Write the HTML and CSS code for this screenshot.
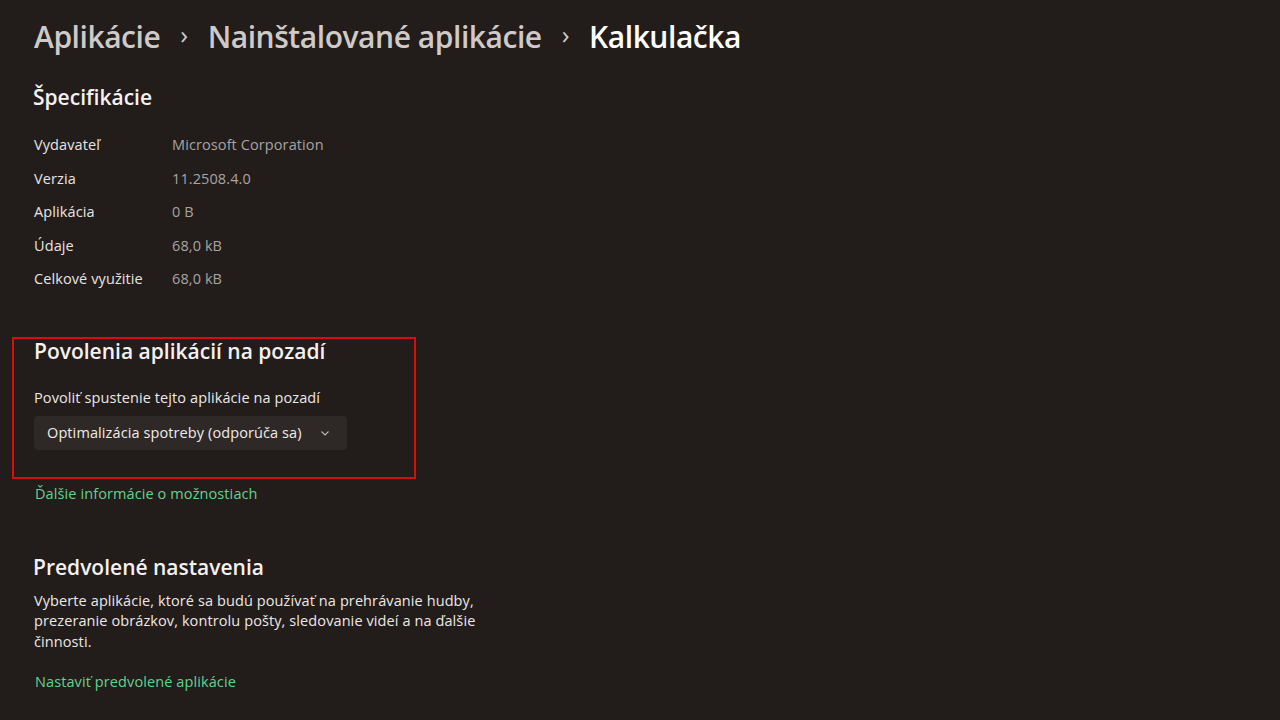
FILE: index.html
```html
<!DOCTYPE html>
<html lang="sk">
<head>
  <meta charset="UTF-8">
  <link rel="stylesheet" href="styles.css">
  <title>Kalkulačka</title>
</head>
<body>
  <div class="page">
    <div class="breadcrumb">
      <span class="crumb">Aplikácie</span>
      <span class="sep">›</span>
      <span class="crumb">Nainštalované aplikácie</span>
      <span class="sep">›</span>
      <span class="crumb current">Kalkulačka</span>
    </div>

    <h2 class="section-title specs-title">Špecifikácie</h2>
    <div class="specs">
      <div class="spec-label">Vydavateľ</div><div class="spec-value">Microsoft Corporation</div>
      <div class="spec-label">Verzia</div><div class="spec-value">11.2508.4.0</div>
      <div class="spec-label">Aplikácia</div><div class="spec-value">0 B</div>
      <div class="spec-label">Údaje</div><div class="spec-value">68,0 kB</div>
      <div class="spec-label">Celkové využitie</div><div class="spec-value">68,0 kB</div>
    </div>

    <div class="highlight">
      <h2 class="section-title">Povolenia aplikácií na pozadí</h2>
      <div class="field-label">Povoliť spustenie tejto aplikácie na pozadí</div>
      <div class="dropdown">
        <span>Optimalizácia spotreby (odporúča sa)</span>
        <svg class="chevron" width="10" height="10" viewBox="0 0 10 10">
          <path d="M1.5 3.5 L5 7 L8.5 3.5" fill="none" stroke="#bdb8b6" stroke-width="1.1"/>
        </svg>
      </div>
    </div>
    <a class="link more-link" href="#">Ďalšie informácie o možnostiach</a>

    <h2 class="section-title defaults-title">Predvolené nastavenia</h2>
    <p class="desc">Vyberte aplikácie, ktoré sa budú používať na prehrávanie hudby, prezeranie obrázkov, kontrolu pošty, sledovanie videí a na ďalšie činnosti.</p>
    <a class="link" href="#">Nastaviť predvolené aplikácie</a>
  </div>
</body>
</html>
```

FILE: styles.css
```css
body {
  margin: 0;
  background-color: #221c1b;
  font-family: 'Open Sans', 'Noto Sans', Arial, sans-serif;
  color: #ece8e6;
  width: 1280px;
  height: 720px;
  overflow: hidden;
}
.page {
  display: flex;
  flex-direction: column;
  align-items: flex-start;
  padding: 15px 0 0 34px;
}
.breadcrumb {
  display: flex;
  align-items: center;
  gap: 20px;
  font-size: 30px;
  font-weight: 600;
  letter-spacing: -0.45px;
  color: #cfcac8;
  height: 42px;
}
.breadcrumb .sep {
  font-size: 26px;
  font-weight: 400;
  color: #cfcac8;
  margin-top: -4px;
}
.breadcrumb .current {
  color: #ffffff;
}
.section-title {
  margin: 0;
  font-size: 21px;
  font-weight: 600;
  color: #f4f1f0;
  line-height: 28px;
}
.specs-title {
  margin-top: 26px;
  margin-left: -1px;
}
.specs {
  display: grid;
  grid-template-columns: 138px auto;
  grid-auto-rows: 33.5px;
  margin-top: 17px;
  font-size: 14.5px;
  letter-spacing: 0.1px;
  align-items: center;
}
.spec-label {
  color: #e8e4e2;
}
.spec-value {
  color: #a9a4a2;
}
.highlight {
  display: flex;
  flex-direction: column;
  align-items: flex-start;
  margin: 41px 0 0 -22px;
  padding: 0 0 27px 20px;
  width: 380px;
  border: 2px solid #d80d0d;
}
.highlight .section-title {
  margin-top: -2px;
}
.field-label {
  margin-top: 23px;
  font-size: 14.5px;
  letter-spacing: 0.1px;
  color: #ece8e6;
}
.dropdown {
  display: flex;
  align-items: center;
  gap: 12px;
  margin-top: 9px;
  height: 34px;
  padding: 0 17px 0 13px;
  background-color: #2e2826;
  border-radius: 4px;
  font-size: 14.5px;
  letter-spacing: 0.1px;
  color: #f0ecea;
}
.chevron {
  margin-left: 6px;
}
.link {
  font-size: 14.5px;
  letter-spacing: 0.1px;
  color: #62d38f;
  text-decoration: none;
}
.more-link {
  margin-top: 5px;
  margin-left: 1px;
}
.defaults-title {
  margin-top: 50px;
  margin-left: -1px;
}
.desc {
  margin: 10px 0 0;
  width: 470px;
  font-size: 14.5px;
  line-height: 20.5px;
  letter-spacing: 0.1px;
  color: #ece8e6;
}
.desc + .link {
  margin-top: 20px;
  margin-left: 1px;
}
```
